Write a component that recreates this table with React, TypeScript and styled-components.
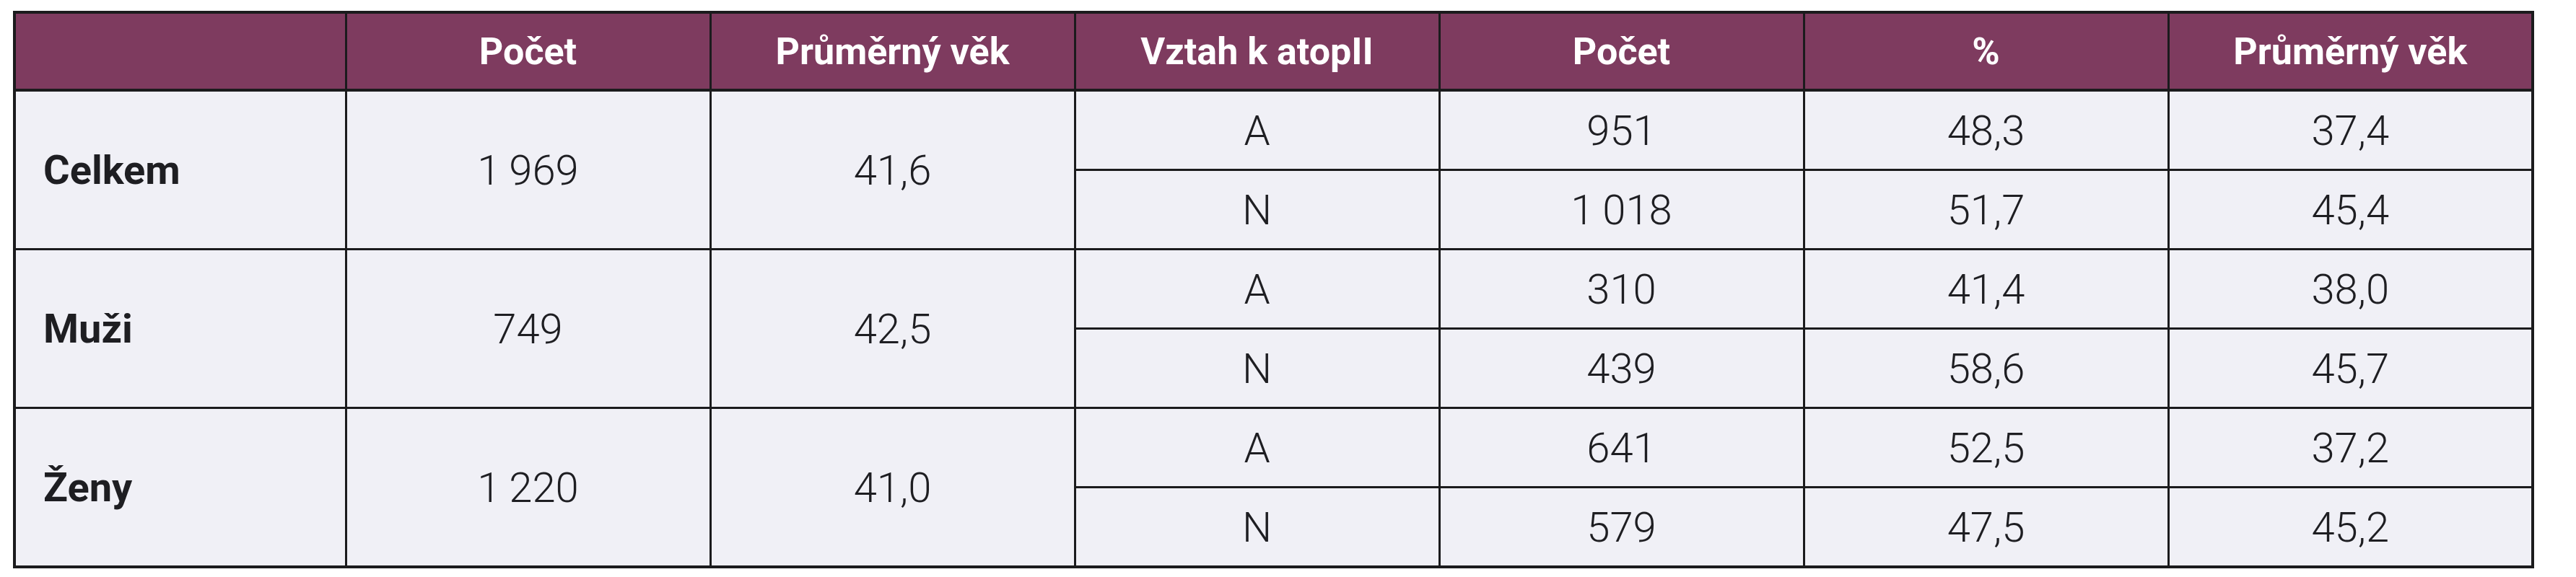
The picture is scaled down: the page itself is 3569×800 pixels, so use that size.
import React from "react";
import styled, { createGlobalStyle } from "styled-components";

const GlobalStyle = createGlobalStyle`
  html, body {
    margin: 0;
    padding: 0;
    background: #ffffff;
  }
`;

const Page = styled.div`
  padding: 15px 0 0 18px;
`;

const Table = styled.table`
  border-collapse: collapse;
  table-layout: fixed;
  width: 3492px;
  font-family: Roboto, "Liberation Sans", sans-serif;
  border: 4px solid #1b1b1d;
`;

const HeadCell = styled.th`
  height: 104px;
  padding: 0;
  background: #7e3b5f;
  color: #ffffff;
  font-size: 52px;
  font-weight: 700;
  text-align: center;
  border: 3px solid #1b1b1d;
  border-bottom-width: 4px;
`;

const LabelCell = styled.td`
  padding: 0 0 0 38px;
  background: #f0f0f6;
  color: #1e1e22;
  font-size: 56px;
  font-weight: 700;
  text-align: left;
  border: 3px solid #1b1b1d;
`;

const Cell = styled.td`
  height: 107px;
  padding: 0;
  background: #f0f0f6;
  color: #1e1e22;
  font-size: 58px;
  font-weight: 300;
  text-align: center;
  border: 3px solid #1b1b1d;
`;

type Sub = { rel: string; count: string; pct: string; age: string };
type Group = { label: string; count: string; age: string; subs: Sub[] };

const groups: Group[] = [
  {
    label: "Celkem",
    count: "1\u2009969",
    age: "41,6",
    subs: [
      { rel: "A", count: "951", pct: "48,3", age: "37,4" },
      { rel: "N", count: "1\u2009018", pct: "51,7", age: "45,4" },
    ],
  },
  {
    label: "Muži",
    count: "749",
    age: "42,5",
    subs: [
      { rel: "A", count: "310", pct: "41,4", age: "38,0" },
      { rel: "N", count: "439", pct: "58,6", age: "45,7" },
    ],
  },
  {
    label: "Ženy",
    count: "1\u2009220",
    age: "41,0",
    subs: [
      { rel: "A", count: "641", pct: "52,5", age: "37,2" },
      { rel: "N", count: "579", pct: "47,5", age: "45,2" },
    ],
  },
];

const headers = ["", "Počet", "Průměrný věk", "Vztah k atopII", "Počet", "%", "Průměrný věk"];

export default function App() {
  return (
    <>
      <GlobalStyle />
      <Page>
        <Table>
          <colgroup>
            <col style={{ width: 459 }} />
            {headers.slice(1).map((_, i) => (
              <col key={i} style={{ width: 505 }} />
            ))}
          </colgroup>
          <thead>
            <tr>
              {headers.map((h, i) => (
                <HeadCell key={i}>{h}</HeadCell>
              ))}
            </tr>
          </thead>
          <tbody>
            {groups.map((g) =>
              g.subs.map((s, i) => (
                <tr key={g.label + s.rel}>
                  {i === 0 ? (
                    <>
                      <LabelCell rowSpan={2}>{g.label}</LabelCell>
                      <Cell rowSpan={2}>{g.count}</Cell>
                      <Cell rowSpan={2}>{g.age}</Cell>
                    </>
                  ) : null}
                  <Cell>{s.rel}</Cell>
                  <Cell>{s.count}</Cell>
                  <Cell>{s.pct}</Cell>
                  <Cell>{s.age}</Cell>
                </tr>
              ))
            )}
          </tbody>
        </Table>
      </Page>
    </>
  );
}
